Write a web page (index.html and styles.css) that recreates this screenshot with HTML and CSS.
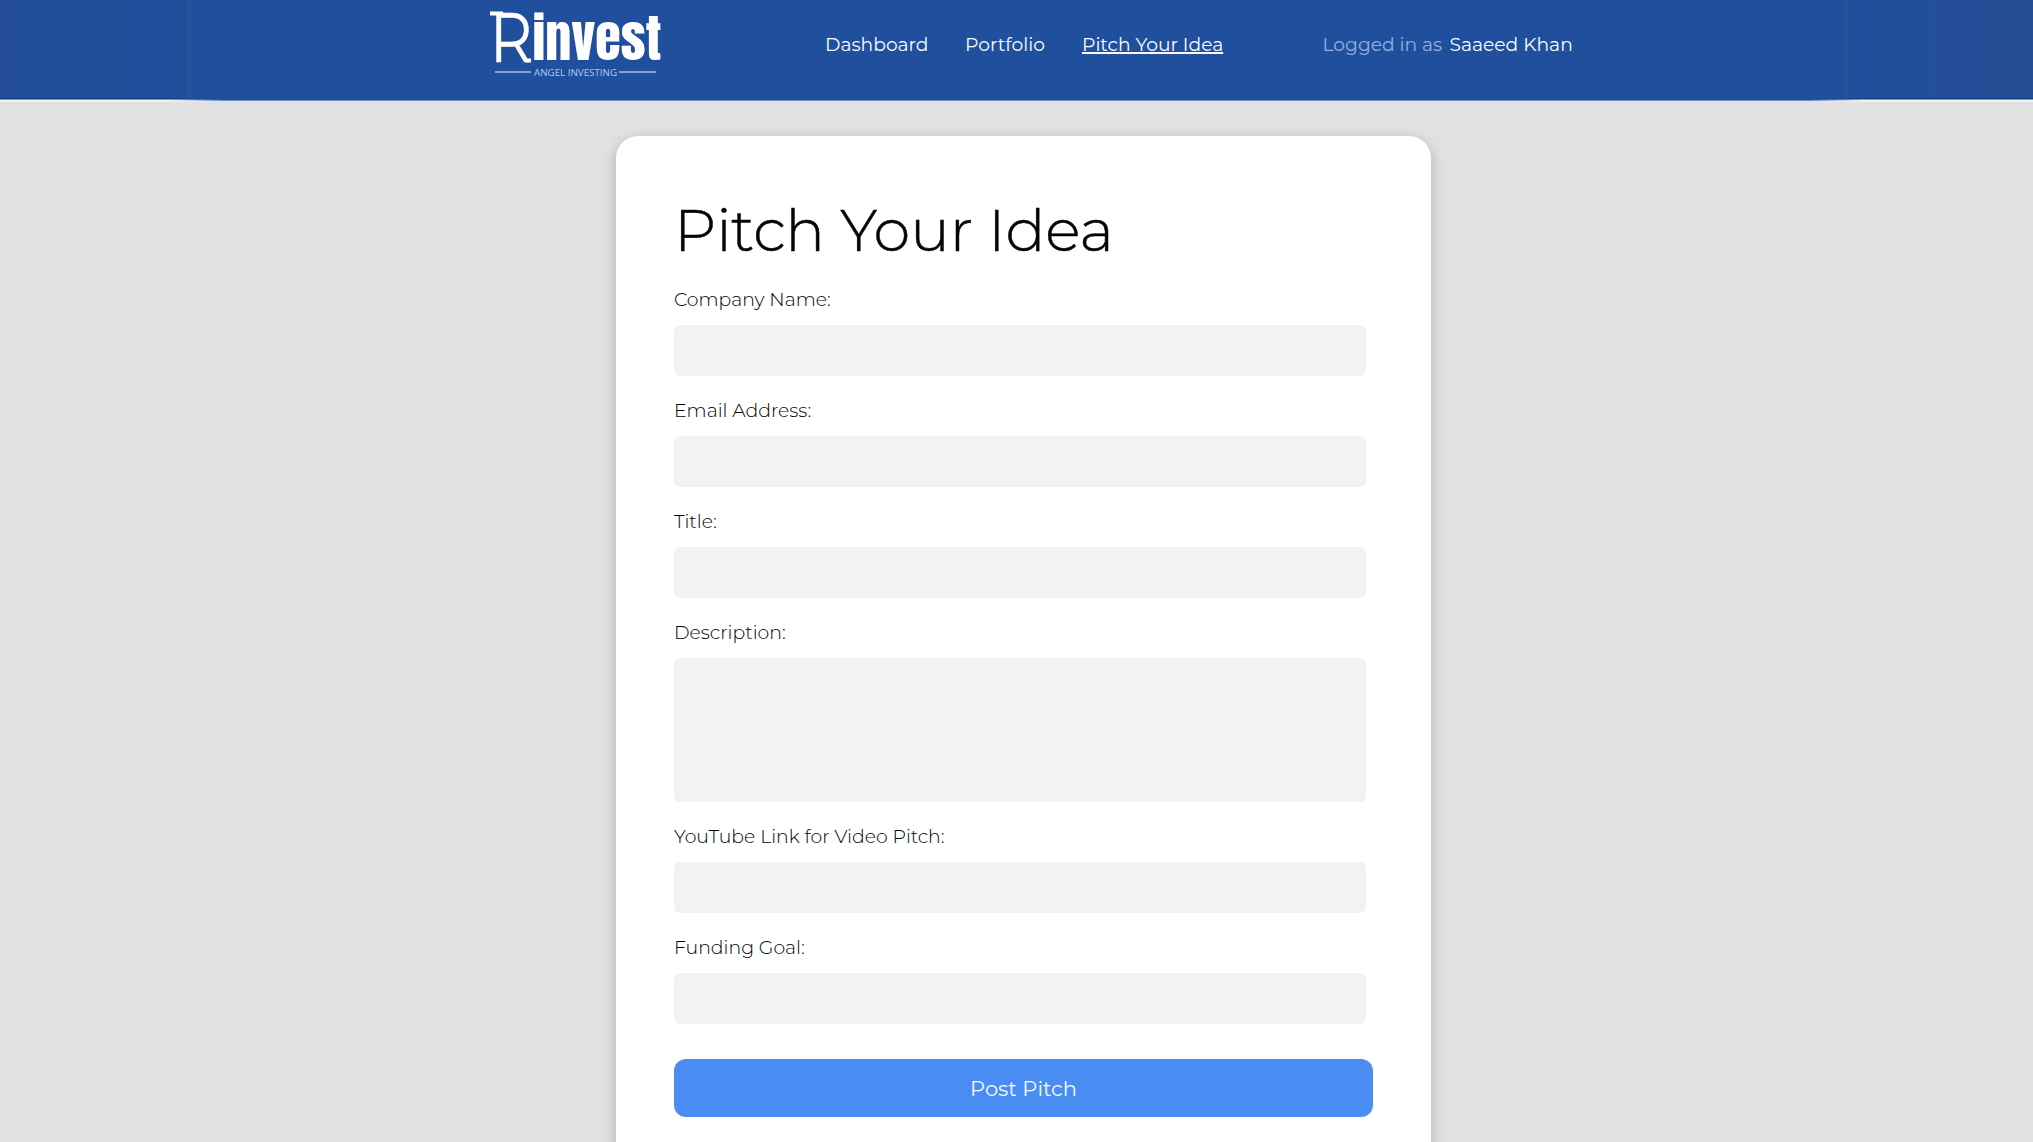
FILE: index.html
```html
<!DOCTYPE html>
<html lang="en">
<head>
<meta charset="utf-8">
<title>Pitch Your Idea</title>
<link rel="stylesheet" href="styles.css">
</head>
<body>
<header class="header">
  <svg class="logo" width="176" height="80" viewBox="0 0 176 80" role="img" aria-label="Rinvest">
    <text class="logo-r" x="1" y="62" textLength="42" lengthAdjust="spacingAndGlyphs">R</text>
    <path class="logo-serif" d="M1 13.5H14M37 60.5H42"/>
    <text class="logo-name" x="43.5" y="59.5" textLength="129" lengthAdjust="spacingAndGlyphs">invest</text>
    <path class="logo-rule" d="M6 72H42M130 72H167"/>
    <text class="logo-tag" x="45" y="76" textLength="83" lengthAdjust="spacingAndGlyphs">ANGEL INVESTING</text>
  </svg>
  <nav class="nav">
    <a class="link dashboard">Dashboard</a>
    <a class="link portfolio">Portfolio</a>
    <a class="link active">Pitch Your Idea</a>
  </nav>
  <div class="user"><span class="status">Logged in as</span><span class="name">Saaeed Khan</span></div>
</header>
<main class="card">
  <h1 class="title">Pitch Your Idea</h1>
  <form class="form">
    <label class="field"><span class="label">Company Name:</span><input class="input"></label>
    <label class="field"><span class="label">Email Address:</span><input class="input"></label>
    <label class="field"><span class="label">Title:</span><input class="input"></label>
    <label class="field"><span class="label">Description:</span><textarea class="input area"></textarea></label>
    <label class="field"><span class="label">YouTube Link for Video Pitch:</span><input class="input"></label>
    <label class="field"><span class="label">Funding Goal:</span><input class="input"></label>
    <button class="submit" type="button">Post Pitch</button>
  </form>
</main>
</body>
</html>
```
FILE: styles.css
```css
* { box-sizing: border-box; }
body {
  margin: 0;
  height: 1142px;
  overflow: hidden;
  background: #e1e1e1;
  font-family: Montserrat, Inter, sans-serif;
  font-size: 18.7px;
}
.header {
  display: flex;
  height: 101px;
  padding-left: 489px;
  color: #f8fbff;
  background:
    linear-gradient(90deg, #0000 186px, #ffffff06 188px, #ffffff06 190px, #0000 192px, #0000 1843px, #ffffff06 1845px, #ffffff06 1847px, #0000 1849px),
    linear-gradient(90deg, #244e98, #204f9d 240px, #204f9d 1800px, #264e95);
  border-bottom: 1px solid #6e8cc0;
}
.header::after {
  content: "";
  position: absolute;
  top: 98px;
  left: 0;
  width: 100%;
  height: 4px;
  background:
    linear-gradient(#173f80 0 1px, #8599b4 1px 2px, #f2faff 2px, #e8eef2) 0 0 / 225px 4px no-repeat,
    linear-gradient(#173f80 0 1px, #8599b4 1px 2px, #f2faff 2px, #e8eef2) 100% 0 / 225px 4px no-repeat;
  -webkit-mask: linear-gradient(90deg, #000 170px, #0000 225px, #0000 1808px, #000 1863px);
}
.logo { flex: none; fill: #fff; overflow: visible; }
.logo-r { font: 400 69px Montserrat, sans-serif; stroke: #fff; stroke-width: 0.5; }
.logo-name { font: 400 51px Anton, Inter, sans-serif; }
.logo-tag { font: 400 9.8px "Open Sans", sans-serif; fill: #b8c8e7; }
.logo-serif { stroke: #fff; stroke-width: 4; }
.logo-rule { stroke: #a8bce0; stroke-width: 1.3; }
.nav { display: flex; gap: 38px; margin-left: 160px; padding-top: 33px; }
.link { height: 23px; line-height: 23px; white-space: nowrap; }
.dashboard { width: 102px; }
.portfolio { width: 79px; }
.active {
  width: 141px;
  text-decoration: underline;
  text-decoration-thickness: 2px;
  text-underline-offset: 1px;
}
.user { display: flex; gap: 8px; margin-left: 99.5px; padding-top: 33px; line-height: 23px; white-space: nowrap; }
.status { width: 119px; color: #93afe0; }
.card {
  width: 815px;
  height: 1041px;
  margin: 35px 0 0 616px;
  padding: 58px;
  border-radius: 22px;
  background: #fff;
  box-shadow: 0 4px 13px #0000003b;
}
.title {
  margin: 0;
  height: 72px;
  line-height: 72px;
  color: #050505;
  font-size: 59px;
  font-weight: 300;
  -webkit-text-stroke: 0.5px #050505;
  white-space: nowrap;
}
.form { display: flex; flex-direction: column; padding-top: 22px; }
.field { display: flex; flex-direction: column; margin-bottom: 23px; }
.label { height: 37px; line-height: 24px; color: #000; font-size: 18.85px; font-weight: 300; }
.input {
  width: 692px;
  height: 51px;
  padding: 12px;
  border: 0;
  border-radius: 6px;
  background: #f2f2f2;
  font: inherit;
  resize: none;
}
.area { height: 144px; }
.submit {
  width: 699px;
  height: 58px;
  margin-top: 12px;
  border: 0;
  border-radius: 12px;
  color: #f4f9ff;
  background: #498df3;
  font: 400 21px Montserrat, Inter, sans-serif;
}
```
